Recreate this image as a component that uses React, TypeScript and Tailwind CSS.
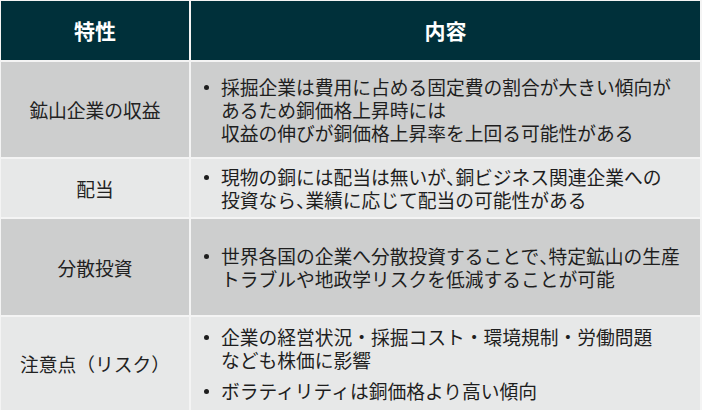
import React from "react";

const FONT = { fontFamily: '"Noto Sans CJK JP", "Noto Sans", sans-serif' };

type Row = {
  label: string;
  bg: string;
  items: string[][];
};

const ROWS: Row[] = [
  {
    label: "鉱山企業の収益",
    bg: "bg-[#cdcece]",
    items: [
      [
        "採掘企業は費用に占める固定費の割合が大きい傾向が",
        "あるため銅価格上昇時には",
        "収益の伸びが銅価格上昇率を上回る可能性がある",
      ],
    ],
  },
  {
    label: "配当",
    bg: "bg-[#e7e8e8]",
    items: [
      [
        "現物の銅には配当は無いが、銅ビジネス関連企業への",
        "投資なら、業績に応じて配当の可能性がある",
      ],
    ],
  },
  {
    label: "分散投資",
    bg: "bg-[#cdcece]",
    items: [
      [
        "世界各国の企業へ分散投資することで、特定鉱山の生産",
        "トラブルや地政学リスクを低減することが可能",
      ],
    ],
  },
  {
    label: "注意点（リスク）",
    bg: "bg-[#e7e8e8]",
    items: [
      ["企業の経営状況・採掘コスト・環境規制・労働問題", "なども株価に影響"],
      ["ボラティリティは銅価格より高い傾向"],
    ],
  },
];

// the reference sets the Japanese comma half width
function Line({ text }: { text: string }) {
  const parts = text.split("、");
  return (
    <div className="whitespace-nowrap">
      {parts.map((p, i) => (
        <React.Fragment key={i}>
          {p}
          {i < parts.length - 1 && (
            <span className="[font-feature-settings:'halt']">、</span>
          )}
        </React.Fragment>
      ))}
    </div>
  );
}

function Bullet({ lines }: { lines: string[] }) {
  return (
    <div className="flex">
      <span className="w-[17px] shrink-0 flex justify-start pt-[10px]">
        <span className="block w-[5px] h-[5px] rounded-full bg-[#1e1e1e]" />
      </span>
      <div>
        {lines.map((l) => (
          <Line key={l} text={l} />
        ))}
      </div>
    </div>
  );
}

export default function App() {
  return (
    <div className="w-[702px] h-[414px] bg-white" style={FONT}>
      <div className="grid grid-cols-[188px_509px] grid-rows-[59px_95px_58px_96px_93px] gap-[2px] bg-[#f4f4f4] pt-[1px] pl-[1px] pr-[2px] w-[702px]">
        <div className="bg-[#00303a] flex items-center justify-center text-white font-bold text-[21px]">
          特性
        </div>
        <div className="bg-[#00303a] flex items-center justify-center text-white font-bold text-[21px]">
          内容
        </div>
        {ROWS.map((r) => (
          <React.Fragment key={r.label}>
            <div
              className={`${r.bg} flex items-center justify-center text-[18.75px] text-[#222] leading-[23px]`}
            >
              {r.label}
            </div>
            <div
              className={`${r.bg} flex flex-col justify-center gap-[8px] pl-[13px] text-[18.75px] text-[#1e1e1e] leading-[23px]`}
            >
              {r.items.map((it, i) => (
                <Bullet key={i} lines={it} />
              ))}
            </div>
          </React.Fragment>
        ))}
      </div>
    </div>
  );
}
